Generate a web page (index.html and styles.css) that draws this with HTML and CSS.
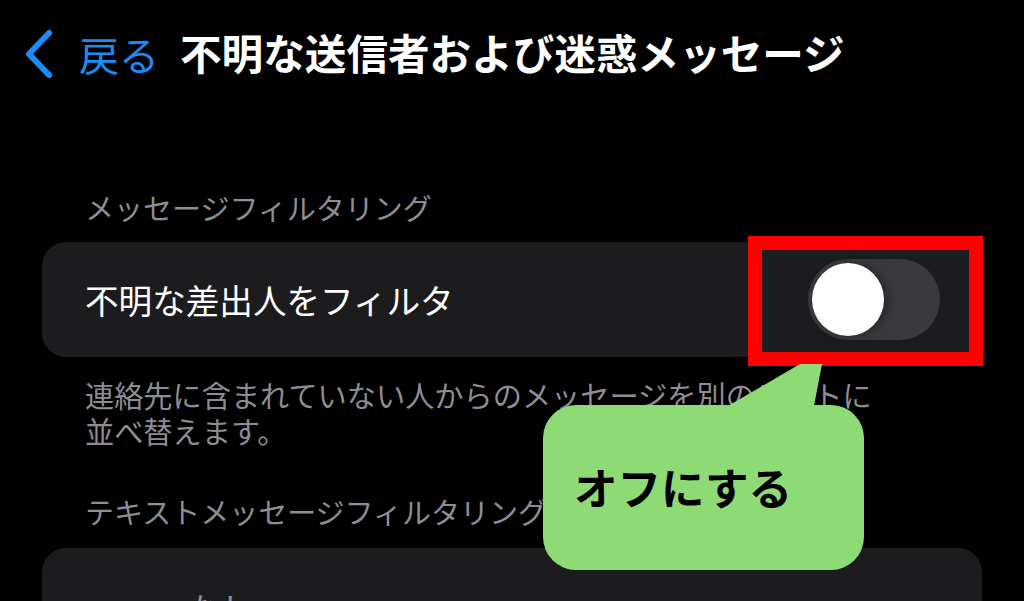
FILE: index.html
```html
<!DOCTYPE html>
<html lang="ja">
<head>
<meta charset="utf-8">
<title>不明な送信者および迷惑メッセージ</title>
<link rel="stylesheet" href="styles.css">
</head>
<body>
<div class="page">
  <header class="nav">
    <svg class="chevron" width="30" height="50" viewBox="0 0 30 50">
      <polyline points="25,4 5,25 25,46" fill="none" stroke="#1a8cf4" stroke-width="6" stroke-linecap="round" stroke-linejoin="round"/>
    </svg>
    <span class="back">戻る</span>
    <h1 class="title">不明な送信者および迷惑メッセージ</h1>
  </header>

  <div class="section-label first">メッセージフィルタリング</div>
  <div class="card">
    <div class="row">
      <span class="row-text">不明な差出人をフィルタ</span>
      <div class="toggle-wrap">
        <div class="toggle"><div class="knob"></div></div>
        <div class="highlight"></div>
      </div>
    </div>
  </div>
  <p class="desc">連絡先に含まれていない人からのメッセージを別のリストに<br>並べ替えます。</p>

  <div class="section-label second">テキストメッセージフィルタリング</div>
  <div class="card">
    <div class="row row-second">
      <span class="row-text dim">なし</span>
      <svg class="check" width="40" height="40" viewBox="0 0 40 40">
        <polyline points="6,26 16,37 34,6" fill="none" stroke="#8e8e93" stroke-width="4.5" stroke-linecap="round" stroke-linejoin="round"/>
      </svg>
    </div>
  </div>

  <svg class="tail" width="100" height="44" viewBox="0 0 100 44">
    <polygon points="0,42 72,0 94,0 86,42" fill="#8edb76"/>
  </svg>
  <div class="bubble">オフにする</div>
</div>
</body>
</html>
```

FILE: styles.css
```css
html, body {
  margin: 0;
  padding: 0;
  background: #000;
}
body {
  font-family: "Noto Sans CJK JP", "Noto Sans", sans-serif;
  color: #fff;
  width: 1024px;
  height: 601px;
  overflow: hidden;
}
.page {
  position: relative;
  width: 1024px;
  height: 601px;
  overflow: hidden;
}
.nav {
  height: 106px;
  display: flex;
  align-items: center;
  padding-left: 24px;
  box-sizing: border-box;
}
.chevron {
  display: block;
  margin-top: 2px;
}
.back {
  color: #1a8cf4;
  font-size: 40px;
  line-height: 1;
  margin-left: 25px;
  margin-top: 2px;
}
.title {
  margin: 0 0 0 21px;
  font-size: 41.6px;
  font-weight: 700;
  line-height: 1;
  color: #fff;
  white-space: nowrap;
}
.section-label {
  color: #8d8d93;
  font-size: 29px;
  line-height: 36px;
  padding-left: 85px;
  white-space: nowrap;
}
.section-label.first {
  margin-top: 83px;
  margin-bottom: 17px;
}
.section-label.second {
  margin-top: 45px;
  margin-bottom: 19px;
}
.card {
  margin: 0 42px;
  height: 115px;
  background: #1c1c1e;
  border-radius: 24px;
}
.row {
  height: 115px;
  display: flex;
  align-items: center;
  justify-content: space-between;
  padding: 0 42px 0 43px;
  box-sizing: border-box;
}
.row-text {
  font-size: 33.6px;
  line-height: 1;
  color: #fff;
}
.row-text.dim {
  color: #8e8e93;
  padding-left: 102px;
  margin-top: 6px;
}
.row-second {
  padding-right: 50px;
}
.check {
  margin-top: 24px;
}
.toggle-wrap {
  position: relative;
  width: 132px;
  height: 81px;
}
.toggle {
  width: 132px;
  height: 81px;
  border-radius: 41px;
  background: #3a3a3e;
  position: relative;
}
.knob {
  position: absolute;
  left: 4px;
  top: 4px;
  width: 72px;
  height: 73px;
  border-radius: 50%;
  background: #fff;
  box-shadow: 4px 1px 10px rgba(0, 0, 0, 0.35);
}
.highlight {
  position: absolute;
  left: -60px;
  top: -23px;
  width: 235px;
  height: 130px;
  box-sizing: border-box;
  border: 14px solid #ff0000;
}
.desc {
  margin: 19px 0 0;
  padding-left: 85px;
  color: #8d8d93;
  font-size: 29.2px;
  line-height: 36px;
  white-space: nowrap;
}
.bubble {
  position: absolute;
  left: 543px;
  top: 405px;
  width: 321px;
  height: 165px;
  box-sizing: border-box;
  border-radius: 33px;
  background: #8edb76;
  color: #000;
  font-size: 43.5px;
  font-weight: 700;
  display: flex;
  align-items: center;
  padding-left: 31px;
  padding-bottom: 2px;
}
.tail {
  position: absolute;
  left: 728px;
  top: 364px;
}
```
